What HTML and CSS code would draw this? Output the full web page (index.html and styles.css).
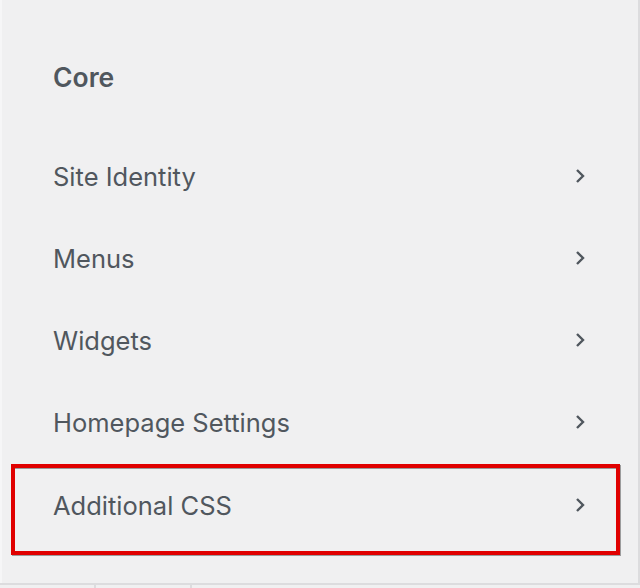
FILE: index.html
```html
<!DOCTYPE html>
<html lang="en">
<head>
<meta charset="utf-8">
<title>Customize</title>
<link rel="stylesheet" href="styles.css">
</head>
<body>
<div class="panel">
  <div class="section-head"><h3 class="section-title">Core</h3></div>
  <ul class="items">
    <li class="item"><span class="label">Site Identity</span><svg class="chev" viewBox="0 0 10 16" width="10" height="16"><path d="M2 2 L8 8 L2 14"/></svg></li>
    <li class="item"><span class="label">Menus</span><svg class="chev" viewBox="0 0 10 16" width="10" height="16"><path d="M2 2 L8 8 L2 14"/></svg></li>
    <li class="item"><span class="label">Widgets</span><svg class="chev" viewBox="0 0 10 16" width="10" height="16"><path d="M2 2 L8 8 L2 14"/></svg></li>
    <li class="item"><span class="label">Homepage Settings</span><svg class="chev" viewBox="0 0 10 16" width="10" height="16"><path d="M2 2 L8 8 L2 14"/></svg></li>
    <li class="highlight">
      <div class="item item-inner"><span class="label">Additional CSS</span><svg class="chev" viewBox="0 0 10 16" width="10" height="16"><path d="M2 2 L8 8 L2 14"/></svg></div>
    </li>
  </ul>
</div>
<div class="footer"><span class="tab"></span><span class="tab"></span><span class="tab last"></span></div>
</body>
</html>
```
FILE: styles.css
```css
* { box-sizing: border-box; }
html, body { margin: 0; padding: 0; }
body {
  background: #f0f0f1;
  font-family: Inter, "Noto Sans", sans-serif;
  color: #50575e;
  width: 640px;
  height: 588px;
  overflow: hidden;
}
.panel {
  height: 583px;
  padding-top: 36px;
  border-left: 2px solid #f6f6f7;
  border-right: 2px solid #dcdcde;
  display: flex;
  flex-direction: column;
}
.section-head {
  height: 82px;
  display: flex;
  align-items: center;
  padding-left: 51px;
  margin-bottom: 17px;
}
.section-title {
  margin: 0;
  font-size: 26.5px;
  font-weight: 600;
  color: #50575e;
}
.items {
  list-style: none;
  margin: 0;
  padding: 0;
}
.item {
  height: 82px;
  display: flex;
  align-items: center;
  justify-content: space-between;
  padding-left: 51px;
  padding-right: 53px;
  font-size: 25.5px;
  font-weight: 400;
}
.chev {
  display: block;
  fill: none;
  stroke: #50575e;
  stroke-width: 2.4;
  stroke-linecap: butt;
  stroke-linejoin: miter;
}
.highlight {
  margin-top: 1px;
  margin-left: 9px;
  margin-right: 18px;
  height: 91px;
  border: 4px solid #e00000;
  box-shadow: 1px 1px 0 rgba(0, 0, 0, 0.35);
  padding-bottom: 10px;
}
.item-inner {
  height: 73px;
  border-top: 1px solid #9a9a9a;
  padding-left: 38px;
  padding-right: 31px;
}
.footer {
  height: 5px;
  border-top: 2px solid #dcdcde;
  display: flex;
}
.tab {
  width: 96px;
  border-right: 2px solid #dcdcde;
}
.tab.last {
  flex: 1;
  border-right: none;
}
```
